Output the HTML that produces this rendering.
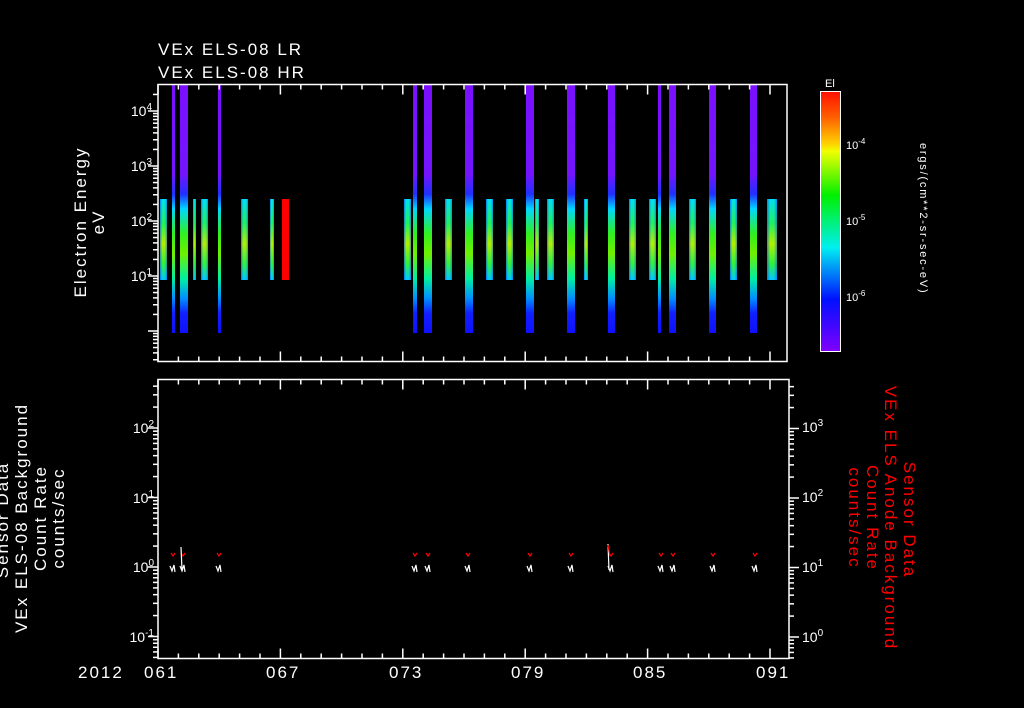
<!DOCTYPE html>
<html><head><meta charset="utf-8">
<style>
html,body{margin:0;padding:0;background:#000;width:1024px;height:708px;overflow:hidden}
svg{display:block}
text{font-family:"Liberation Sans",sans-serif;fill:#fff}
.big{letter-spacing:2px}
</style></head>
<body>
<svg id="s" width="1024" height="708" xmlns="http://www.w3.org/2000/svg">
<defs>
<linearGradient id="tall" x1="0" y1="0" x2="0" y2="1">
<stop offset="0" stop-color="#7a10ff"/>
<stop offset="0.36" stop-color="#7414ff"/>
<stop offset="0.44" stop-color="#2030ff"/>
<stop offset="0.5" stop-color="#00d8ff"/>
<stop offset="0.6" stop-color="#30f020"/>
<stop offset="0.68" stop-color="#70f000"/>
<stop offset="0.78" stop-color="#00f0a0"/>
<stop offset="0.86" stop-color="#0090ff"/>
<stop offset="0.92" stop-color="#1020ff"/>
<stop offset="1" stop-color="#1010ff"/>
</linearGradient>
<linearGradient id="short" x1="0" y1="0" x2="0" y2="1">
<stop offset="0" stop-color="#00e0f0"/>
<stop offset="0.3" stop-color="#20f060"/>
<stop offset="0.55" stop-color="#b0f000"/>
<stop offset="0.8" stop-color="#30f040"/>
<stop offset="1" stop-color="#00c8ff"/>
</linearGradient>
<linearGradient id="edge" x1="0" y1="0" x2="1" y2="0">
<stop offset="0" stop-color="#0040ff" stop-opacity="0.6"/>
<stop offset="0.3" stop-color="#0040ff" stop-opacity="0"/>
<stop offset="0.7" stop-color="#0040ff" stop-opacity="0"/>
<stop offset="1" stop-color="#0040ff" stop-opacity="0.5"/>
</linearGradient>
<linearGradient id="cb" x1="0" y1="0" x2="0" y2="1">
<stop offset="0" stop-color="#ff1000"/>
<stop offset="0.1" stop-color="#ff6000"/>
<stop offset="0.2" stop-color="#ffd000"/>
<stop offset="0.23" stop-color="#f0ff00"/>
<stop offset="0.4" stop-color="#00f000"/>
<stop offset="0.6" stop-color="#00f0f0"/>
<stop offset="0.8" stop-color="#0010ff"/>
<stop offset="1" stop-color="#8000ff"/>
</linearGradient>
</defs>
<g id="bars"></g>
<g id="axes" stroke="#fff" stroke-width="1.5" fill="none"></g>
<g id="traces" fill="none" stroke-width="1.2"></g>
<text x="158" y="55" font-size="17" class="big">VEx ELS-08 LR</text>
<text x="158" y="78" font-size="17" class="big">VEx ELS-08 HR</text>
<rect x="820.5" y="91.5" width="20" height="260" fill="url(#cb)" stroke="#fff"/>
<text x="825" y="87" font-size="11">El</text>
<text x="846" y="149" font-size="11">10<tspan dy="-5" font-size="8">-4</tspan></text>
<text x="846" y="225" font-size="11">10<tspan dy="-5" font-size="8">-5</tspan></text>
<text x="846" y="301" font-size="11">10<tspan dy="-5" font-size="8">-6</tspan></text>
<text transform="translate(920,143) rotate(90)" font-size="11" letter-spacing="1.8">ergs/(cm**2-sr-sec-eV)</text>
<g font-size="17" text-anchor="middle" class="big">
<text transform="translate(86,222) rotate(-90)">Electron Energy</text>
<text transform="translate(104,222) rotate(-90)">eV</text>
<text transform="translate(8,520) rotate(-90)">Sensor Data</text>
<text transform="translate(27,518) rotate(-90)">VEx ELS-08 Background</text>
<text transform="translate(46,518) rotate(-90)">Count Rate</text>
<text transform="translate(64,518) rotate(-90)">counts/sec</text>
<text transform="translate(904,520) rotate(90)" style="fill:#f00">Sensor Data</text>
<text transform="translate(885,518) rotate(90)" style="fill:#f00">VEx ELS Anode Background</text>
<text transform="translate(867,518) rotate(90)" style="fill:#f00">Count Rate</text>
<text transform="translate(849,518) rotate(90)" style="fill:#f00">counts/sec</text>
</g>
<g font-size="17" class="big">
<text x="78" y="678">2012</text>
<text x="144" y="678">061</text><text x="266" y="678">067</text><text x="389" y="678">073</text>
<text x="511" y="678">079</text><text x="633" y="678">085</text><text x="756" y="678">091</text>
</g>
<g font-size="14" id="ylab"></g>
</svg>
<script>
var NS="http://www.w3.org/2000/svg";
function el(p,t,a){var e=document.createElementNS(NS,t);for(var k in a)e.setAttribute(k,a[k]);p.appendChild(e);return e;}
var bars=document.getElementById('bars'),ax=document.getElementById('axes'),yl=document.getElementById('ylab'),tr=document.getElementById('traces');
var tall=[[172,175],[180,188],[218,221],[413,417],[424,432],[465,473],[526,534],[567,575],[608,615],[658,661],[669,676],[709,716],[750,757]];
var shrt=[[160,167],[193,196],[201,208],[241,248],[270,274],[404,411],[445,452],[486,493],[506,513],[535,539],[547,554],[584,588],[629,636],[649,656],[689,696],[730,737],[767,777]];
shrt.forEach(function(b){el(bars,'rect',{x:b[0],y:199,width:b[1]-b[0],height:81,fill:'url(#short)'});el(bars,'rect',{x:b[0],y:199,width:b[1]-b[0],height:81,fill:'url(#edge)'});});
el(bars,'rect',{x:282,y:199,width:7,height:81,fill:'#ff0000'});
tall.forEach(function(b){el(bars,'rect',{x:b[0],y:85,width:b[1]-b[0],height:248,fill:'url(#tall)'});});
el(ax,'rect',{x:158,y:84.5,width:629,height:277});
el(ax,'rect',{x:158,y:379.5,width:631,height:279});
function xt(y0,dir,y1,dir1){for(var d=0;d<=31;d++){var x=158+d*20.4;if(x>787)break;var L=(d%6==0)?10:5;
el(ax,'line',{x1:x,y1:y0,x2:x,y2:y0+dir*L});el(ax,'line',{x1:x,y1:y1,x2:x,y2:y1+dir1*L});}}
xt(84.5,1,361.5,-1);xt(379.5,1,658.5,-1);
function logt(x,dir,ytop,ybot,y0,per){for(var dec=-3;dec<6;dec++){for(var m=1;m<10;m++){var y=y0-(dec+Math.log10(m))*per;if(y<ytop||y>ybot)continue;var L=m==1?10:5;el(ax,'line',{x1:x,y1:y,x2:x+dir*L,y2:y});}}}
logt(158,-1,85,361,331,55);
logt(158,-1,380,658,567,69.5);
logt(789,1,380,658,637,69.5);
function lab(x,y,e,anchor){var t=el(yl,'text',{x:x,y:y,'text-anchor':anchor||'end'});t.textContent='10';var s=el(t,'tspan',{dy:-6,'font-size':10});s.textContent=e;}
[[4,111],[3,166],[2,221],[1,276]].forEach(function(a){lab(152,a[1]+5,a[0]);});
[[2,428],[1,498],[0,567],[-1,637]].forEach(function(a){lab(154,a[1]+5,a[0]);});
[[3,427],[2,497],[1,567],[0,637]].forEach(function(a){lab(802,a[1]+5,a[0],'start');});
var tx=[172,182,218,414,427,467,529,570,610,660,672,712,754];
tx.forEach(function(x,i){el(tr,'polyline',{points:(x-2)+',566 '+x+',571 '+(x+2)+',565 '+(x+3)+',572',stroke:'#fff'});
el(tr,'polyline',{points:(x-1)+',553 '+(x+1)+',556 '+(x+3)+',553',stroke:'#f00'});});
el(tr,'line',{x1:181,y1:547,x2:182,y2:570,stroke:'#fff'});
el(tr,'line',{x1:608,y1:544,x2:609,y2:570,stroke:'#fff'});
el(tr,'line',{x1:608,y1:545,x2:610,y2:556,stroke:'#f00'});
</script>
</body></html>
